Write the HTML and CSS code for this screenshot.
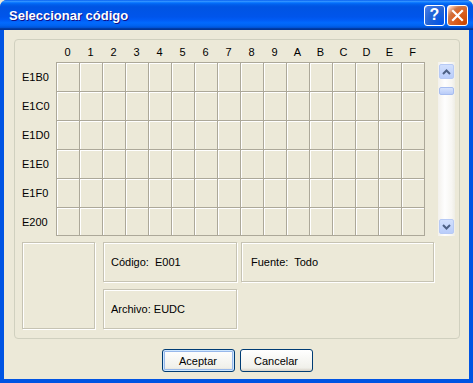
FILE: index.html
```html
<!DOCTYPE html>
<html lang="es">
<head>
    <meta charset="UTF-8">
    <meta name="viewport" content="width=device-width, initial-scale=1.0">
    <title>Seleccionar código</title>
    <link rel="stylesheet" href="styles.css">
</head>
<body>
    <div class="window">
        <div class="titlebar">
            <span class="title">Seleccionar código</span>
            <div class="title-buttons">
                <span class="tb-btn help">?</span>
                <span class="tb-btn close">
                    <svg width="13" height="13" viewBox="0 0 13 13">
                        <path d="M2 2 L11 11 M11 2 L2 11" stroke="#fff" stroke-width="2.2" stroke-linecap="square"/>
                    </svg>
                </span>
            </div>
        </div>

        <div class="client">
            <div class="group">
                <div class="heads">
                    <span></span>
                    <span>0</span><span>1</span><span>2</span><span>3</span>
                    <span>4</span><span>5</span><span>6</span><span>7</span>
                    <span>8</span><span>9</span><span>A</span><span>B</span>
                    <span>C</span><span>D</span><span>E</span><span>F</span>
                </div>

                <div class="chart">
                    <div class="row-labels">
                        <span>E1B0</span>
                        <span>E1C0</span>
                        <span>E1D0</span>
                        <span>E1E0</span>
                        <span>E1F0</span>
                        <span>E200</span>
                    </div>
                    <div class="cells" id="cells"></div>
                    <div class="scrollbar">
                        <span class="sb-btn">
                            <svg width="9" height="6" viewBox="0 0 9 6"><path d="M1 5 L4.5 1.5 L8 5" fill="none" stroke="#4d6185" stroke-width="2"/></svg>
                        </span>
                        <span class="sb-thumb"></span>
                        <span class="sb-space"></span>
                        <span class="sb-btn">
                            <svg width="9" height="6" viewBox="0 0 9 6"><path d="M1 1 L4.5 4.5 L8 1" fill="none" stroke="#4d6185" stroke-width="2"/></svg>
                        </span>
                    </div>
                </div>

                <div class="info">
                    <div class="preview"></div>
                    <div class="fields">
                        <div class="field code">Código:&nbsp; E001</div>
                        <div class="field font">Fuente:&nbsp; Todo</div>
                        <div class="field file">Archivo: EUDC</div>
                    </div>
                </div>
            </div>

            <div class="actions">
                <button class="btn default">Aceptar</button>
                <button class="btn">Cancelar</button>
            </div>
        </div>
    </div>

    <script>
        // build the 6 x 16 empty character cells
        let cells = document.getElementById("cells");
        for (let i = 0; i < 96; i++) {
            let c = document.createElement("div");
            c.classList.add("cell");
            cells.append(c);
        }
    </script>
</body>
</html>
```

FILE: styles.css
```css
* {
    margin: 0;
    padding: 0;
    box-sizing: border-box;
}

body {
    font-family: 'Liberation Sans', Arial, sans-serif;
    font-size: 11px;
    color: #000;
    background-color: #ece9d8;
}

.window {
    width: 473px;
    height: 383px;
    display: flex;
    flex-direction: column;
    background-color: #0054e3;
    border-radius: 7px 7px 0 0;
    overflow: hidden;
}

/* title bar */

.titlebar {
    height: 30px;
    display: flex;
    align-items: center;
    justify-content: space-between;
    padding: 0 5px 0 9px;
    background: linear-gradient(#0058ee 0%, #3593ff 4%, #288eff 6%, #127dff 8%, #036ffc 10%, #0262ee 14%, #0057e5 20%, #0054e3 24%, #0055eb 56%, #005bf5 66%, #026afe 76%, #0062ef 86%, #0052d6 92%, #0040ab 94%, #003092 100%);
}

.title {
    color: #fff;
    font-size: 13px;
    font-weight: bold;
    text-shadow: 1px 1px #0f1089;
    margin-top: 1px;
}

.title-buttons {
    display: flex;
    gap: 2px;
}

.tb-btn {
    width: 21px;
    height: 21px;
    border: 1px solid #fff;
    border-radius: 3px;
    display: flex;
    align-items: center;
    justify-content: center;
    color: #fff;
}

.help {
    background: radial-gradient(circle at 90% 90%, #0054e9 0%, #2263d5 55%, #4479e4 90%, #fff 100%);
    font-size: 16px;
    font-weight: bold;
}

.close {
    background: radial-gradient(circle at 90% 90%, #cc4600 0%, #dc6527 55%, #cd7546 70%, #ffccb2 90%, #fff 100%);
}

/* client area */

.client {
    flex: 1;
    margin: 0 4px 4px 4px;
    background-color: #ece9d8;
    padding: 9px 9px 0 10px;
}

.group {
    height: 300px;
    border: 1px solid #d0d0bf;
    border-radius: 4px;
    padding: 4px 0 0 7px;
}

.heads {
    display: grid;
    grid-template-columns: 34px repeat(16, 23px);
    height: 18px;
}

.heads span {
    text-align: center;
    line-height: 16px;
}

.chart {
    display: flex;
}

.row-labels {
    width: 34px;
    display: flex;
    flex-direction: column;
    padding-top: 1px;
}

.row-labels span {
    height: 29px;
    line-height: 28px;
}

.row-labels span:last-child {
    height: 28px;
}

.cells {
    width: 369px;
    height: 174px;
    display: grid;
    grid-template-columns: repeat(16, 23px);
    grid-template-rows: repeat(5, 29px) 28px;
    border-top: 1px solid #aca899;
    border-left: 1px solid #aca899;
}

.cell {
    border-right: 1px solid #aca899;
    border-bottom: 1px solid #aca899;
    box-shadow: inset 1px 1px #fff;
    background-color: #ece9d8;
}

.scrollbar {
    width: 17px;
    height: 174px;
    margin-left: 13px;
    padding: 2px 1px 2px 1px;
    display: flex;
    flex-direction: column;
    background: linear-gradient(to right, #f3f1ec, #fefefe 40%, #f7f6f2 80%, #eeede5);
}

.sb-btn {
    height: 15px;
    border: 1px solid #b7caf5;
    border-radius: 2px;
    background: linear-gradient(#d2e0fd, #b9cdfa);
    display: flex;
    align-items: center;
    justify-content: center;
}

.sb-thumb {
    height: 8px;
    margin-top: 8px;
    border: 1px solid #a7bdf0;
    border-radius: 2px;
    background: linear-gradient(#d7e3fd, #b9ccf8);
}

.sb-space {
    flex: 1;
}

/* bottom info boxes */

.info {
    display: flex;
    gap: 8px;
    margin-top: 6px;
}

.preview,
.field {
    border: 1px solid #c6c3b3;
    box-shadow: 1px 1px 0 #fff, inset 1px 1px 0 #fff;
}

.preview {
    width: 73px;
    height: 87px;
}

.fields {
    display: grid;
    grid-template-columns: 134px 193px;
    grid-template-rows: 40px 40px;
    column-gap: 4px;
    row-gap: 7px;
}

.field {
    padding-left: 7px;
    display: flex;
    align-items: center;
}

.font {
    padding-left: 9px;
}

/* dialog buttons */

.actions {
    display: flex;
    justify-content: center;
    gap: 5px;
    margin-top: 10px;
}

.btn {
    width: 73px;
    height: 23px;
    font-family: 'Liberation Sans', Arial, sans-serif;
    font-size: 11px;
    color: #000;
    border: 1px solid #003c74;
    border-radius: 3px;
    background: linear-gradient(#fff, #f0f0ea 85%, #d6d0c5);
}

.btn.default {
    box-shadow: inset 0 0 0 1px #cee7ff, inset 0 0 0 2px #98b8ea;
}
```
